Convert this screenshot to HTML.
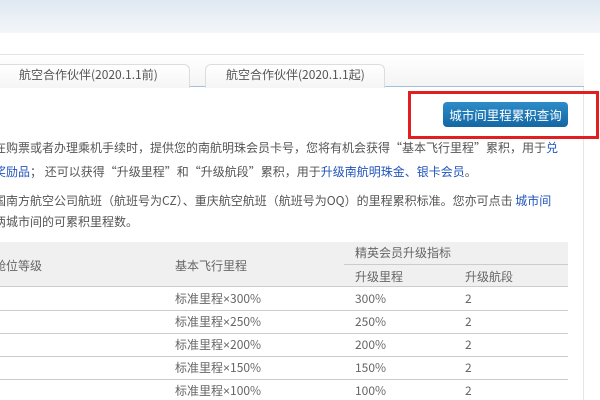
<!DOCTYPE html>
<html><head><meta charset="utf-8"><style>
*{margin:0;padding:0;box-sizing:border-box}
body{width:600px;height:400px;overflow:hidden;background:#fff;font-family:"Noto Sans CJK SC","Liberation Sans",sans-serif;font-size:12px;color:#666;position:relative}
.banner{position:absolute;left:0;top:0;width:600px;height:33px;background:linear-gradient(180deg,#dfe8f1,#eef2f7 70%,#f3f5f8);}
.rb{position:absolute;left:583px;top:54px;width:1px;height:346px;background:#e6e6e6}
.tabbar{position:absolute;left:0;top:54px;width:584px;height:33px;border-top:1px solid #e3e3e3;background:linear-gradient(#fff,#f4f4f4);border-bottom:1px solid #9ec0de}
.tab{position:absolute;top:9px;height:24px;line-height:20px;font-size:12px;color:#555;background:linear-gradient(#fff,#f5f5f5);border:1px solid #ddd;border-bottom:none;border-radius:0 6px 0 0}
.red{position:absolute;left:408px;top:91px;width:191px;height:48px;border:3px solid #e02020}
.btn{position:absolute;left:443px;top:102px;width:125px;height:25px;border-radius:4px;background:linear-gradient(#2d8cc8,#1467a3);color:#fff;font-size:12.5px;line-height:25px;text-align:center}
p{position:absolute;left:-6px;white-space:nowrap;color:#555;font-size:12px;line-height:16px}
a{color:#2255bb;text-decoration:none}
.hd{position:absolute;left:0;top:242px;width:568px;height:45px;background:#f0f0f0;border-bottom:1px solid #ccc}
.t{position:absolute;white-space:nowrap;font-size:12px;color:#666;line-height:16px}
.x{font-family:"Liberation Sans",sans-serif}
.ln{position:absolute;left:0;width:568px;height:1px;background:#ccc}
</style></head><body>
<div class="banner"></div>
<div class="rb"></div>
<div class="tabbar">
<div class="tab" style="left:-10px;width:200px;padding-left:28px">航空合作伙伴(2020.1.1前)</div>
<div class="tab" style="left:205px;width:180px;padding-left:20px;border-radius:6px 6px 0 0">航空合作伙伴(2020.1.1起)</div>
</div>
<div class="red"></div>
<div class="btn">城市间里程累积查询</div>
<p style="top:140px">在购票或者办理乘机手续时，提供您的南航明珠会员卡号，您将有机会获得“基本飞行里程”累积，用于<a>兑</a></p>
<p style="top:164px"><a>奖励品</a>； 还可以获得“升级里程”和“升级航段”累积，用于<a>升级南航明珠金、银卡会员</a>。</p>
<p style="top:193px">国南方航空公司航班（航班号为CZ）、重庆航空航班（航班号为OQ）的里程累积标准。您亦可点击 <a>城市间</a></p>
<p style="top:214px">两城市间的可累积里程数。</p>
<div class="hd"></div>
<div style="position:absolute;left:344px;top:264px;width:224px;height:1px;background:#ccc"></div>
<div class="t" style="left:-6px;top:258px">舱位等级</div>
<div class="t" style="left:175px;top:258px">基本飞行里程</div>
<div class="t" style="left:355px;top:245px">精英会员升级指标</div>
<div class="t" style="left:355px;top:269px">升级里程</div>
<div class="t" style="left:465px;top:269px">升级航段</div>
<div class="ln" style="top:310px"></div>
<div class="ln" style="top:333px"></div>
<div class="ln" style="top:356px"></div>
<div class="ln" style="top:379px"></div>
<div class="t" style="left:175px;top:291px">标准里程<span class="x">×</span>300%</div><div class="t" style="left:355px;top:291px">300%</div><div class="t" style="left:465px;top:291px">2</div>
<div class="t" style="left:175px;top:314px">标准里程<span class="x">×</span>250%</div><div class="t" style="left:355px;top:314px">250%</div><div class="t" style="left:465px;top:314px">2</div>
<div class="t" style="left:175px;top:337px">标准里程<span class="x">×</span>200%</div><div class="t" style="left:355px;top:337px">200%</div><div class="t" style="left:465px;top:337px">2</div>
<div class="t" style="left:175px;top:360px">标准里程<span class="x">×</span>150%</div><div class="t" style="left:355px;top:360px">150%</div><div class="t" style="left:465px;top:360px">2</div>
<div class="t" style="left:175px;top:383px">标准里程<span class="x">×</span>100%</div><div class="t" style="left:355px;top:383px">100%</div><div class="t" style="left:465px;top:383px">2</div>
</body></html>
